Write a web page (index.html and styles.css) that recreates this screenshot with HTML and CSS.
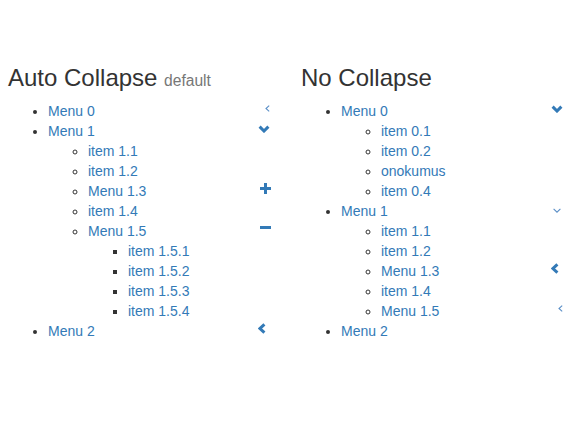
FILE: index.html
```html
<!DOCTYPE html>
<html>
<head>
<meta charset="utf-8">
<link rel="stylesheet" href="styles.css">
</head>
<body>
<div class="page">
  <div class="col">
    <h3 class="title">Auto Collapse <small>default</small></h3>
    <ul class="menu">
      <li><span class="ic ic-angle-left"><svg width="5" height="7" viewBox="0 0 5 7"><polyline points="4.2,0.6 1,3.5 4.2,6.4" fill="none" stroke="#5b8fc7" stroke-width="1.1"/></svg></span><a href="#">Menu 0</a></li>
      <li><span class="ic ic-chev-down"><svg width="12" height="8" viewBox="0 0 12 8"><polyline points="1.6,1.6 6,6 10.4,1.6" fill="none" stroke="#337ab7" stroke-width="3"/></svg></span><a href="#">Menu 1</a>
        <ul>
          <li><a href="#">item 1.1</a></li>
          <li><a href="#">item 1.2</a></li>
          <li><span class="ic ic-plus"><svg width="11" height="11" viewBox="0 0 11 11"><path d="M0 5.5H11M5.5 0V11" stroke="#337ab7" stroke-width="3"/></svg></span><a href="#">Menu 1.3</a></li>
          <li><a href="#">item 1.4</a></li>
          <li><span class="ic ic-minus"><svg width="11" height="3" viewBox="0 0 11 3"><rect width="11" height="3" fill="#337ab7"/></svg></span><a href="#">Menu 1.5</a>
            <ul>
              <li><a href="#">item 1.5.1</a></li>
              <li><a href="#">item 1.5.2</a></li>
              <li><a href="#">item 1.5.3</a></li>
              <li><a href="#">item 1.5.4</a></li>
            </ul>
          </li>
        </ul>
      </li>
      <li><span class="ic ic-chev-left"><svg width="8" height="11" viewBox="0 0 8 11"><polyline points="6.4,1.4 2,5.5 6.4,9.6" fill="none" stroke="#337ab7" stroke-width="3"/></svg></span><a href="#">Menu 2</a></li>
    </ul>
  </div>
  <div class="col">
    <h3 class="title">No Collapse</h3>
    <ul class="menu">
      <li><span class="ic ic-chev-down"><svg width="12" height="8" viewBox="0 0 12 8"><polyline points="1.6,1.6 6,6 10.4,1.6" fill="none" stroke="#337ab7" stroke-width="3"/></svg></span><a href="#">Menu 0</a>
        <ul>
          <li><a href="#">item 0.1</a></li>
          <li><a href="#">item 0.2</a></li>
          <li><a href="#">onokumus</a></li>
          <li><a href="#">item 0.4</a></li>
        </ul>
      </li>
      <li><span class="ic ic-angle-down"><svg width="8" height="5" viewBox="0 0 8 5"><polyline points="0.6,0.8 4,4.2 7.4,0.8" fill="none" stroke="#5b8fc7" stroke-width="1.1"/></svg></span><a href="#">Menu 1</a>
        <ul>
          <li><a href="#">item 1.1</a></li>
          <li><a href="#">item 1.2</a></li>
          <li><span class="ic ic-chev-left"><svg width="8" height="11" viewBox="0 0 8 11"><polyline points="6.4,1.4 2,5.5 6.4,9.6" fill="none" stroke="#337ab7" stroke-width="3"/></svg></span><a href="#">Menu 1.3</a></li>
          <li><a href="#">item 1.4</a></li>
          <li><span class="ic ic-angle-left"><svg width="5" height="7" viewBox="0 0 5 7"><polyline points="4.2,0.6 1,3.5 4.2,6.4" fill="none" stroke="#5b8fc7" stroke-width="1.1"/></svg></span><a href="#">Menu 1.5</a></li>
        </ul>
      </li>
      <li><a href="#">Menu 2</a></li>
    </ul>
  </div>
</div>
</body>
</html>
```

FILE: styles.css
```css
html, body {
  margin: 0;
  padding: 0;
  background: #fff;
}

body {
  font-family: "Liberation Sans", Arial, Helvetica, sans-serif;
  font-size: 14px;
  line-height: 20px;
  color: #333;
}

.page {
  display: grid;
  grid-template-columns: 264px 264px;
  column-gap: 29px;
  padding: 45px 0 0 8px;
}

.title {
  font-size: 24px;
  font-weight: 500;
  line-height: 1.1;
  margin: 20px 0 10px;
  color: #333;
}

.title small {
  font-size: 65%;
  font-weight: 400;
  color: #777;
}

.menu,
.menu ul {
  margin: 0;
  padding-left: 40px;
}

.menu a {
  color: #337ab7;
  text-decoration: none;
}

.ic {
  float: right;
  display: flex;
  justify-content: flex-end;
  height: 20px;
}

.ic svg {
  display: block;
}

.ic-angle-left svg {
  margin-top: 4px;
  margin-right: 2px;
}

.ic-chev-down svg {
  margin-top: 4px;
  margin-right: 2px;
}

.ic-angle-down svg {
  margin-top: 7px;
  margin-right: 4px;
}

.ic-plus svg {
  margin-top: 2px;
  margin-right: 1px;
}

.ic-minus svg {
  margin-top: 5px;
  margin-right: 1px;
}

.ic-chev-left svg {
  margin-top: 2px;
  margin-right: 6px;
}
```
